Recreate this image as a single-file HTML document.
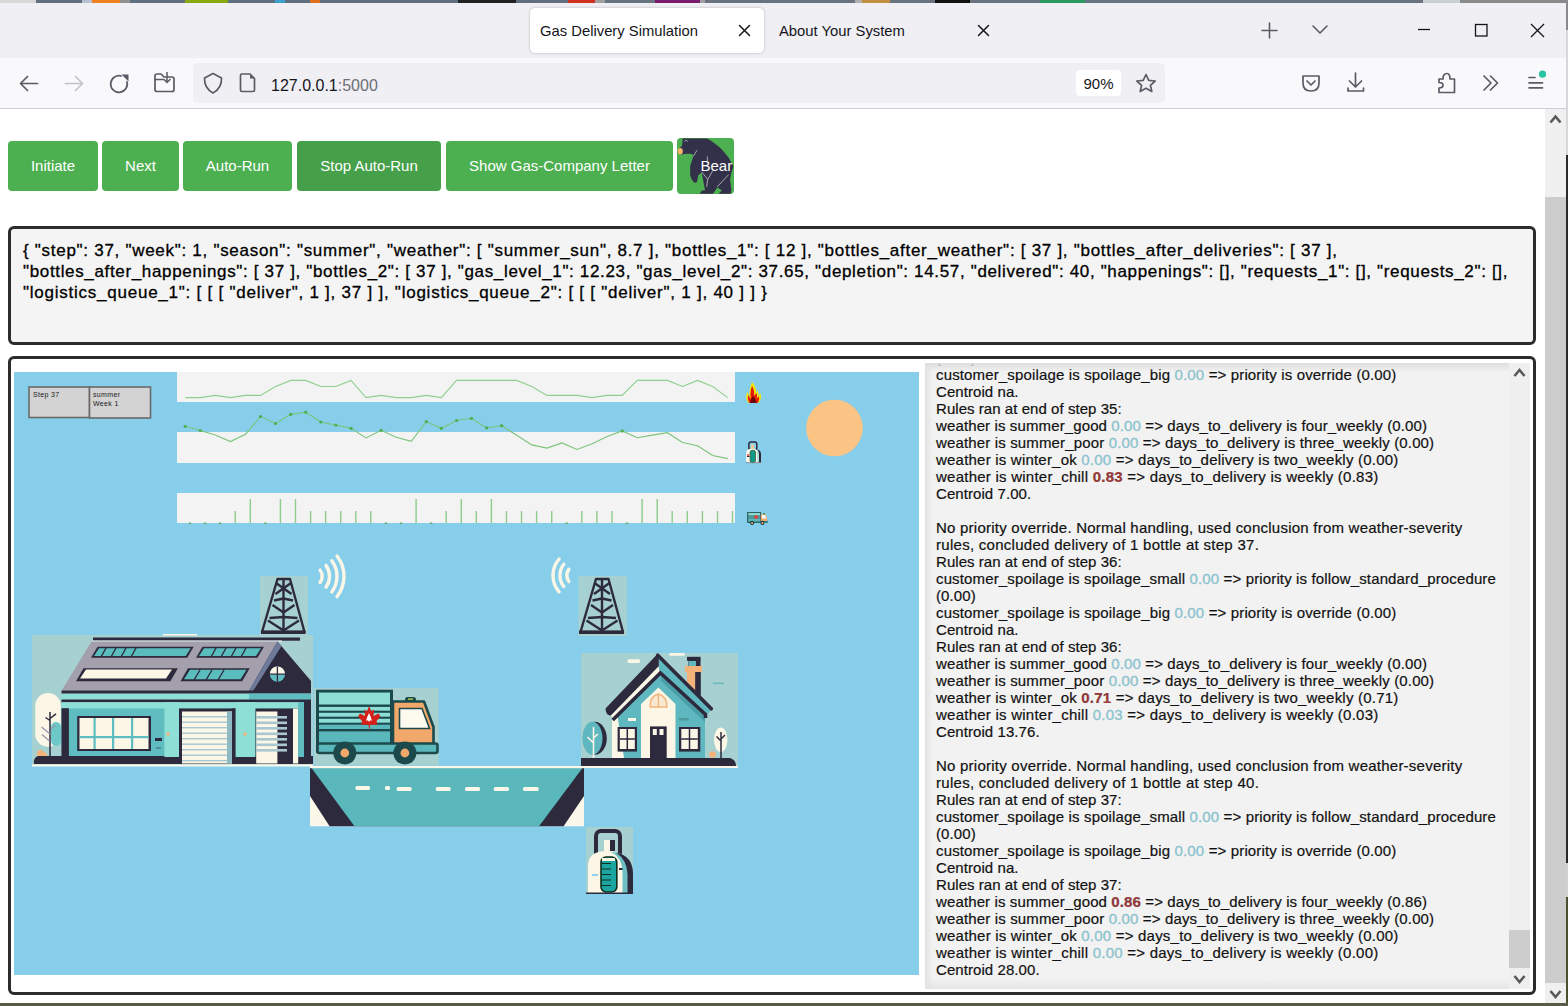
<!DOCTYPE html>
<html><head><meta charset="utf-8">
<style>
*{box-sizing:border-box}
html,body{margin:0;padding:0;width:1568px;height:1006px;overflow:hidden;background:#fff;font-family:"Liberation Sans",sans-serif;position:relative}
.a{position:absolute}
.nw{white-space:nowrap}
#desk{left:0;top:0;width:1568px;height:3px;background:linear-gradient(90deg,#d8d8d8 0px 36px,#5f6f80 36px 82px,#b8c0d0 82px 92px,#f08020 92px 120px,#909090 120px 130px,#5f6f80 130px 185px,#88aa10 185px 228px,#5f6f80 228px 275px,#3aa0c8 275px 285px,#5f6f80 285px 310px,#e07020 310px 320px,#5f6f80 320px 458px,#222222 458px 516px,#5f6f80 516px 568px,#d03020 568px 595px,#a0a0a0 595px 605px,#6a7480 605px 655px,#7a1a6a 655px 700px,#a0a0a0 700px 705px,#6a7480 705px 855px,#b0b0b0 855px 862px,#c09040 862px 890px,#6a7480 890px 935px,#111111 935px 970px,#6a7480 970px 1040px,#2a9a60 1040px 1085px,#6a7480 1085px 1423px,#c8d0d0 1423px 1460px,#8a8a8a 1460px 1568px)}
#tabbar{left:0;top:3px;width:1566px;height:55px;background:#f0eff4}
#navbar{left:0;top:58px;width:1566px;height:50px;background:#f9f9fb}
#navline{left:0;top:108px;width:1566px;height:1px;background:#cfcfd8}
.tab{border-radius:5px}
#tab1{left:530px;top:8px;width:234px;height:45px;background:#fff;box-shadow:0 0 3px rgba(0,0,0,.25)}
.tabt{font-size:14.8px;color:#15141a;top:22.5px}
#url{left:193px;top:63px;width:972px;height:40px;background:#f0f0f4;border-radius:5px}
#zoom{left:1076px;top:70px;width:45px;height:26px;background:#fff;border-radius:4px;font-size:15px;color:#15141a;text-align:center;line-height:27px}
.btn{top:141px;height:50px;background:#4caf50;border-radius:4px;color:#fff;font-size:15px;line-height:50px;text-align:center}
#json{left:8px;top:226px;width:1528px;height:119px;border:3px solid #2c2c2c;border-radius:6px;background:#f4f4f4}
.jl{left:23px;font-size:17px;color:#000;-webkit-text-stroke:.3px #000}
#cont{left:8px;top:356px;width:1528px;height:639px;border:3px solid #2c2c2c;border-radius:6px;background:#fff}
#sky{left:14px;top:372px;width:905px;height:603px;background:#87ceeb;overflow:hidden}
#log{left:925px;top:363px;width:605px;height:626px;background:#f2f2f2;overflow:hidden}
.ll{left:11px;font-size:15px;line-height:17px;color:#111;white-space:nowrap;-webkit-text-stroke:.2px #111}
.z{color:#8cc3ce;font-weight:normal;-webkit-text-stroke:.35px #8cc3ce}
.r{color:#a33a3a;font-weight:bold}
.tA{letter-spacing:.148px}.tB{letter-spacing:.073px}.tC{letter-spacing:.05px}.tD{letter-spacing:.12px}.tE{letter-spacing:.15px}.tF{letter-spacing:.21px}.tG{letter-spacing:.24px}.tH{letter-spacing:.07px}.tI{letter-spacing:.235px}.tJ{letter-spacing:.28px}.tK{letter-spacing:.14px}.tL{letter-spacing:.1px}
#pscroll{left:1545px;top:109px;width:21px;height:894px;background:#f0f0f0}
#pthumb{left:1545px;top:197px;width:21px;height:786px;background:#cdcdcd}
#winr{left:1566px;top:0;width:2px;height:1006px;background:linear-gradient(#8a8a8a 0 30px,#d8d8d8 30px 155px,#2a2a2a 155px 863px,#d0d0d0 863px 897px,#4a5030 897px)}
#deskb{left:0;top:1003px;width:1568px;height:3px;background:#5a5a48}
</style></head><body>
<div id="desk" class="a"></div>
<div id="tabbar" class="a"></div>
<div id="tab1" class="a tab"></div>
<div class="a nw tabt" style="left:540px">Gas Delivery Simulation</div>
<div class="a nw tabt" style="left:779px">About Your System</div>
<div id="navbar" class="a"></div>
<div id="url" class="a"></div>
<div id="zoom" class="a">90%</div>
<div class="a nw" style="left:271px;top:77px;font-size:16px;color:#15141a">127.0.0.1<span style="color:#6d6d74">:5000</span></div>
<div id="navline" class="a"></div>
<svg class="a" style="left:0;top:0" width="1568" height="110" viewBox="0 0 1568 110">
<g fill="none" stroke="#15141a" stroke-width="1.5" stroke-linecap="round">
<path d="M739.5,25.5 L749.5,35.5 M749.5,25.5 L739.5,35.5"/>
<path d="M978.5,25.5 L988.5,35.5 M988.5,25.5 L978.5,35.5"/>
</g>
<g fill="none" stroke="#5b5b66" stroke-width="1.6" stroke-linecap="round" stroke-linejoin="round">
<path d="M1269.5,23 L1269.5,38 M1262,30.5 L1277,30.5"/>
<path d="M1313,26 L1320,33 L1327,26"/>
</g>
<g fill="none" stroke="#15141a" stroke-width="1.3">
<path d="M1418,29.5 L1430,29.5"/>
<rect x="1475.5" y="24.5" width="11.5" height="11.5"/>
<path d="M1531,24 L1544,37 M1544,24 L1531,37"/>
</g>
<!-- nav icons -->
<g fill="none" stroke="#5b5b66" stroke-width="1.7" stroke-linecap="round" stroke-linejoin="round">
<path d="M20.5,83.5 L37.5,83.5 M27.5,76.5 L20.5,83.5 L27.5,90.5"/>
<path d="M121.1,76 A8.3,8.3 0 1 0 127,81.9"/>
<path d="M155,76 Q155,74 157,74 L161,74 L164,77 L172,77 Q174,77 174,79 L174,89.5 Q174,91.5 172,91.5 L157,91.5 Q155,91.5 155,89.5Z"/>
<path d="M155,79.5 L163,79.5"/>
<path d="M213,73.5 L221.5,78 Q222,88 213,93 Q204,88 204.5,78Z"/>
<path d="M242,74 L250,74 L254.5,78.5 L254.5,90 Q254.5,91.5 253,91.5 L242,91.5 Q240.5,91.5 240.5,90 L240.5,75.5 Q240.5,74 242,74Z"/>
<path d="M1146,74.5 L1148.8,80.3 L1155.2,81 L1150.4,85.3 L1151.8,91.5 L1146,88.3 L1140.2,91.5 L1141.6,85.3 L1136.8,81 L1143.2,80.3Z"/>
<path d="M1303,76 L1319,76 L1319,83 Q1319,91 1311,91 Q1303,91 1303,83Z"/>
<path d="M1307,81 L1311,85 L1315,81"/>
<path d="M1355.5,73 L1355.5,87 M1349.5,81 L1355.5,87 L1361.5,81 M1348,88 L1348,91 L1363.5,91 L1363.5,88"/>
<path d="M1484,76 L1491,83 L1484,90 M1490.5,76 L1497.5,83 L1490.5,90"/>
<path d="M1529,77.5 L1535,77.5 M1529,82.8 L1542.5,82.8 M1529,87.8 L1542.5,87.8"/>
<path d="M1439,79 L1443,79 Q1443,73.5 1447,73.5 Q1450,73.5 1450,79 L1454.5,79 L1454.5,92.5 L1439,92.5 L1439,88 Q1443,88 1443,85 Q1443,82.5 1439,82.5Z"/>
</g>
<path d="M1474,14 L1476,16" stroke="none"/>
<g fill="none" stroke="#c4c4c8" stroke-width="1.7" stroke-linecap="round" stroke-linejoin="round">
<path d="M65.5,83.5 L82.5,83.5 M75.5,76.5 L82.5,83.5 L75.5,90.5"/>
</g>
<path d="M121.5,74.5 L128.5,74.5 L128.5,81.5Z" fill="#5b5b66"/>
<path d="M167,72 L167,82 M163.5,79 L167,82.5 L170.5,79" fill="none" stroke="#5b5b66" stroke-width="1.5"/>
<path d="M250,74 L254.5,78.5 L250,78.5Z" fill="#5b5b66"/>
<circle cx="1542.5" cy="74.2" r="3.6" fill="#2ac3a2"/>
</svg>


<div class="a btn" style="left:8px;width:90px">Initiate</div>
<div class="a btn" style="left:102px;width:77px">Next</div>
<div class="a btn" style="left:183px;width:109px">Auto-Run</div>
<div class="a btn" style="left:297px;width:144px;background:#45a049">Stop Auto-Run</div>
<div class="a btn" style="left:446px;width:227px">Show Gas-Company Letter</div>
<div class="a" style="left:677px;top:138px;width:57px;height:56px;background:#4caf50;border-radius:4px;overflow:hidden">
<svg width="57" height="56" viewBox="0 0 57 56" style="position:absolute;left:0;top:0">
<path d="M5.7,0.5 L29.4,0.5 C33,1.5 36,4.3 36.1,4.3 C40,7 44.3,11 44.3,11 C48,15 51.7,19.7 51.7,19.7 L55,25.8 L56.4,28.5 L54.4,34.6 L53,41.4 L54.4,51.5 L53.7,55.8 L41.5,55.8 L44.9,52.2 L40.2,49.5 L36.1,55.8 L22.6,55.8 L24.7,52.8 L28,52.2 L26,41.4 L24.7,34.6 L21.3,37.3 L20,44 C18.5,45 17.5,45 16.6,44 C14,41 13.2,37.3 13.2,37.3 L13.2,27.8 L15.9,19.7 L15.9,16.4 C13,15.5 11,15.7 9.8,15.7 L3.7,16.4 L0.3,14.3 L1.7,10.9 L5.1,7.6 Z" fill="#33304a"/>
<ellipse cx="3.2" cy="13.2" rx="2.6" ry="3.2" fill="#f5b46a"/>
<path d="M7.5,3.5 Q9,0.8 10.8,3.5" fill="none" stroke="#ddd" stroke-width=".7"/>
<path d="M20,12.3 L16.2,18.4 M30.4,18.4 L30.4,23.1 M35.5,33.2 L30.7,41.4 L29.7,48.8 M24.7,33.9 L30.7,41.4 M51.7,36.6 L40.2,48.8" fill="none" stroke="#c8c8c0" stroke-width=".8"/>
</svg>
<div class="a nw" style="left:23.5px;top:18.5px;font-size:15px;color:#fff">Bear</div>
</div>

<div id="json" class="a"></div>
<div class="a nw jl" style="top:241px;letter-spacing:.716px">{ "step": 37, "week": 1, "season": "summer", "weather": [ "summer_sun", 8.7 ], "bottles_1": [ 12 ], "bottles_after_weather": [ 37 ], "bottles_after_deliveries": [ 37 ],</div>
<div class="a nw jl" style="top:262px;letter-spacing:.655px">"bottles_after_happenings": [ 37 ], "bottles_2": [ 37 ], "gas_level_1": 12.23, "gas_level_2": 37.65, "depletion": 14.57, "delivered": 40, "happenings": [], "requests_1": [], "requests_2": [],</div>
<div class="a nw jl" style="top:283px;letter-spacing:.759px">"logistics_queue_1": [ [ [ "deliver", 1 ], 37 ] ], "logistics_queue_2": [ [ [ "deliver", 1 ], 40 ] ] }</div>

<div id="cont" class="a"></div>
<div id="sky" class="a">
<svg style="position:absolute;left:0;top:0" width="905" height="603" viewBox="14 372 905 603">
<rect x="177" y="372" width="558" height="30" fill="#f3f3f3"/>
<rect x="177" y="432" width="558" height="31" fill="#f3f3f3"/>
<rect x="177" y="493" width="558" height="30" fill="#f3f3f3"/>
<polyline points="185.2,397.6 200.3,397.6 215.3,395.4 230.4,397.6 245.5,395.4 260.5,395.4 275.6,386.5 290.7,380.4 305.8,380.4 320.8,386.5 335.9,386.5 351.0,380.4 366.0,397.6 381.1,395.4 396.2,397.6 411.2,397.6 426.3,395.4 441.4,397.6 456.5,380.4 471.5,380.4 486.6,380.4 501.7,380.4 516.7,380.4 531.8,386.5 546.9,395.4 562.0,395.4 577.0,395.4 592.1,397.6 607.2,395.4 622.2,395.4 637.3,380.4 652.4,380.4 667.4,380.4 682.5,386.5 697.6,380.4 712.7,386.5 727.7,397.6" fill="none" stroke="#8fd08f" stroke-width="1.1"/>
<polyline points="185.2,426.3 200.3,430.5 215.3,435.0 230.4,441.6 245.5,434.2 260.5,416.6 275.6,423.5 290.7,414.4 305.8,412.2 320.8,422.0 335.9,425.1 351.0,428.3 366.0,437.9 381.1,430.3 396.2,437.2 411.2,441.4 426.3,421.6 441.4,428.3 456.5,420.5 471.5,418.3 486.6,427.9 501.7,425.7 516.7,435.3 531.8,444.9 546.9,448.1 562.0,442.9 577.0,449.4 592.1,443.8 607.2,436.4 622.2,430.9 637.3,437.7 652.4,435.1 667.4,432.7 682.5,442.5 697.6,445.7 712.7,455.5 727.7,458.6" fill="none" stroke="#7cc47c" stroke-width="1.1"/>
<g fill="#4caf50"><circle cx="185.2" cy="426.3" r="1.6"/><circle cx="200.3" cy="430.5" r="1.6"/><circle cx="260.5" cy="416.6" r="1.6"/><circle cx="275.6" cy="423.5" r="1.6"/><circle cx="290.7" cy="414.4" r="1.6"/><circle cx="305.8" cy="412.2" r="1.6"/><circle cx="320.8" cy="422.0" r="1.6"/><circle cx="335.9" cy="425.1" r="1.6"/><circle cx="351.0" cy="428.3" r="1.6"/><circle cx="381.1" cy="430.3" r="1.6"/><circle cx="426.3" cy="421.6" r="1.6"/><circle cx="441.4" cy="428.3" r="1.6"/><circle cx="456.5" cy="420.5" r="1.6"/><circle cx="471.5" cy="418.3" r="1.6"/><circle cx="486.6" cy="427.9" r="1.6"/><circle cx="501.7" cy="425.7" r="1.6"/><circle cx="622.2" cy="430.9" r="1.6"/></g>
<rect x="188.8" y="522.6" width="2.4" height="1.2" fill="#4aa84a"/><rect x="203.9" y="522.6" width="2.4" height="1.2" fill="#4aa84a"/><rect x="218.9" y="522.6" width="2.4" height="1.2" fill="#4aa84a"/><rect x="234.5" y="511" width="1.4" height="12" fill="#8ccc8c"/><rect x="249.6" y="499" width="1.4" height="24" fill="#8ccc8c"/><rect x="264.2" y="522.6" width="2.4" height="1.2" fill="#4aa84a"/><rect x="279.7" y="499" width="1.4" height="24" fill="#8ccc8c"/><rect x="294.8" y="499" width="1.4" height="24" fill="#8ccc8c"/><rect x="309.9" y="511" width="1.4" height="12" fill="#8ccc8c"/><rect x="324.9" y="511" width="1.4" height="12" fill="#8ccc8c"/><rect x="340.0" y="511" width="1.4" height="12" fill="#8ccc8c"/><rect x="355.1" y="511" width="1.4" height="12" fill="#8ccc8c"/><rect x="370.1" y="511" width="1.4" height="12" fill="#8ccc8c"/><rect x="384.7" y="522.6" width="2.4" height="1.2" fill="#4aa84a"/><rect x="399.8" y="522.6" width="2.4" height="1.2" fill="#4aa84a"/><rect x="415.4" y="499" width="1.4" height="24" fill="#8ccc8c"/><rect x="429.9" y="522.6" width="2.4" height="1.2" fill="#4aa84a"/><rect x="445.5" y="511" width="1.4" height="12" fill="#8ccc8c"/><rect x="460.6" y="499" width="1.4" height="24" fill="#8ccc8c"/><rect x="475.6" y="511" width="1.4" height="12" fill="#8ccc8c"/><rect x="490.7" y="499" width="1.4" height="24" fill="#8ccc8c"/><rect x="505.8" y="511" width="1.4" height="12" fill="#8ccc8c"/><rect x="520.8" y="511" width="1.4" height="12" fill="#8ccc8c"/><rect x="535.9" y="511" width="1.4" height="12" fill="#8ccc8c"/><rect x="551.0" y="511" width="1.4" height="12" fill="#8ccc8c"/><rect x="565.5" y="522.6" width="2.4" height="1.2" fill="#4aa84a"/><rect x="581.1" y="511" width="1.4" height="12" fill="#8ccc8c"/><rect x="596.2" y="511" width="1.4" height="12" fill="#8ccc8c"/><rect x="611.3" y="511" width="1.4" height="12" fill="#8ccc8c"/><rect x="625.8" y="522.6" width="2.4" height="1.2" fill="#4aa84a"/><rect x="641.4" y="499" width="1.4" height="24" fill="#8ccc8c"/><rect x="656.5" y="499" width="1.4" height="24" fill="#8ccc8c"/><rect x="671.5" y="511" width="1.4" height="12" fill="#8ccc8c"/><rect x="686.6" y="511" width="1.4" height="12" fill="#8ccc8c"/><rect x="701.7" y="511" width="1.4" height="12" fill="#8ccc8c"/><rect x="716.8" y="511" width="1.4" height="12" fill="#8ccc8c"/><rect x="731.8" y="511" width="1.4" height="12" fill="#8ccc8c"/>
<circle cx="834.5" cy="428" r="28.3" fill="#fbc384"/>
<!-- step boxes -->
<rect x="29" y="387" width="60.5" height="30.5" fill="#d3d3d3" stroke="#6a6a6a" stroke-width="1.6"/>
<rect x="89.5" y="387" width="61" height="31" fill="#d3d3d3" stroke="#6a6a6a" stroke-width="1.6"/>
<g font-family="Liberation Sans" font-size="7" fill="#1a1a1a" letter-spacing=".35">
<text x="33" y="396.5">Step 37</text>
<text x="93" y="396.5">summer</text>
<text x="93" y="405.5">Week 1</text>
</g>
<!-- small icons -->
<g id="flame">
<path d="M752,382 C755,385 756.5,389 756,393 L757.6,390.2 C759,393 758.5,395 758,397 L760.6,393.2 C761.5,397 761,401 758,403 L749,403 C746,401 745.5,396 747.2,391.9 C748.5,394 749,396 749.5,397 C749,392 750,387 752,382Z" fill="#f2e600"/>
<path d="M752,386 C754,389 754.5,392 754,396 L756.5,393 C757.5,396 757,398 756,399 L758.8,396.5 C759.5,399 759,401.5 757.5,403 L749.5,403 C748,401 747.5,398 748.2,395 C749.5,397 750,398 750.8,399 C750,394 750.5,390 752,386Z" fill="#e8180c"/>
<path d="M753,396 C755,398 756,400 756.5,403 L750,403 C750.5,400 751.5,398 753,396Z" fill="#700808"/>
</g>
<g id="bicon">
<rect x="748.9" y="441.9" width="7.9" height="8" rx="2" fill="none" stroke="#2e2a3e" stroke-width="1.5"/>
<rect x="751" y="444.5" width="3" height="4.5" fill="#f0c890"/>
<path d="M746.1,462.6 L746.1,453 Q746.1,448.8 752.5,448.8 Q759.1,448.8 759.1,453 L759.1,462.6Z" fill="#fbf8ee"/>
<path d="M755.5,449 Q761,449.5 761,454 L761,462.6 L758.8,462.6 L758.8,454 Q758.5,450.5 755.5,449Z" fill="#2e2a3e"/>
<path d="M757,449.2 Q758.8,450.5 758.8,454 L758.8,462.6 L757.5,462.6Z" fill="#9ee0dc"/>
<rect x="750.1" y="450.3" width="5.4" height="12.3" rx="2" fill="#0e9a8a" stroke="#3a4a20" stroke-width=".7"/>
<rect x="747" y="454" width="2.5" height="2" fill="#f07070"/>
<rect x="747" y="456" width="2.5" height="1" fill="#2e2a3e"/>
<rect x="746" y="462.3" width="15" height=".8" fill="#8a7a80"/>
</g>
<g id="ticon">
<rect x="747.6" y="512.6" width="13" height="9.8" fill="#4e9a9a" stroke="#2a5a5a" stroke-width="1"/>
<rect x="748.5" y="513.3" width="11.5" height="1.6" fill="#9aeede"/>
<rect x="748.5" y="519" width="11.5" height="2" fill="#5ab8bc"/>
<path d="M760.8,514.2 L765.5,514.2 L767,518 L767,521.5 L760.8,521.5Z" fill="#f3a86b"/>
<path d="M762,515 L765.2,515 L766.3,518.5 L762,518.5Z" fill="#f4fbfb"/>
<rect x="760" y="521" width="8" height="1.8" fill="#3a7a7a"/>
<circle cx="752.1" cy="522.9" r="2.1" fill="#1a4048"/><circle cx="762.4" cy="522.9" r="2.1" fill="#1a4048"/>
<circle cx="752.1" cy="523" r="1" fill="#f3b070"/><circle cx="762.4" cy="523" r="1" fill="#f3b070"/>
<circle cx="756.2" cy="516.9" r="2" fill="#e04040"/>
<rect x="763" y="513" width="2" height="1.4" fill="#3a8a50"/>
</g>
<!-- signal waves -->
<g fill="none" stroke="#fbf6e6" stroke-width="3.4" stroke-linecap="round">
<path d="M320.1,570.1 A11,11 0 0 1 320.1,582.5"/>
<path d="M326.0,565.4 A18.5,18.5 0 0 1 326.0,587.2"/>
<path d="M331.8,560.7 A26,26 0 0 1 331.8,591.9"/>
<path d="M337.0,556.0 A33,33 0 0 1 337.0,596.6"/>
<path d="M568.9,569.2 A11,11 0 0 0 568.9,581.6"/>
<path d="M563.8,564.3 A18,18 0 0 0 563.8,586.5"/>
<path d="M559.1,559.0 A25,25 0 0 0 559.1,591.8"/>
</g>

<!-- tower images -->
<g id="tower1">
<rect x="260" y="576" width="48" height="59" fill="#a7d1d0"/>
<g fill="none" stroke="#2e2a3e" stroke-width="2.4" stroke-linejoin="round">
<path d="M277.5,579 L290,579 L304.5,632 L262,632Z"/>
<path d="M283.5,579 L283.5,632"/>
<path d="M276,583 L291.5,594 M291,583 L275.5,594"/>
<path d="M274,600.5 L283.5,598.5 L293,600.5"/>
<path d="M272.5,605 L283.5,612.5 L294.5,605"/>
<path d="M269.5,618 L283.5,617 L297.5,618"/>
<path d="M268,620.5 L283.5,630.5 L299,620.5"/>
</g>
<rect x="261" y="630.5" width="44.5" height="3.5" fill="#2e2a3e"/>
</g>
<g id="tower2">
<rect x="578.5" y="576" width="48.5" height="60" fill="#a7d1d0"/>
<g fill="none" stroke="#2e2a3e" stroke-width="2.4" stroke-linejoin="round">
<path d="M596,579 L608.5,579 L623,632 L580.5,632Z"/>
<path d="M602,579 L602,632"/>
<path d="M594.5,583 L610,594 M609.5,583 L594,594"/>
<path d="M592.5,600.5 L602,598.5 L611.5,600.5"/>
<path d="M591,605 L602,612.5 L613,605"/>
<path d="M588,618 L602,617 L616,618"/>
<path d="M586.5,620.5 L602,630.5 L617.5,620.5"/>
</g>
<rect x="579" y="630.5" width="45" height="3.5" fill="#2e2a3e"/>
</g>
<!-- warehouse -->
<g id="warehouse">
<rect x="32" y="635" width="281" height="130" fill="#a7d1d0"/>
<rect x="32" y="764.5" width="281" height="2" fill="#fbf8ea"/>
<!-- tree -->
<rect x="35.2" y="693" width="25.6" height="53.7" rx="12.8" fill="#fbf6e6"/>
<rect x="51" y="722" width="10" height="24" rx="5" fill="#6ec8c8"/>
<path d="M51,727 L51,746.7 L48,746.7 Z" fill="#fbf6e6"/>
<path d="M50,712 L50,757 M50,718.5 L56,713.8 M50,720.5 L45.5,717.5" fill="none" stroke="#2e2a3e" stroke-width="1.5"/>
<path d="M50,734 L41.5,727 M49.5,741 L42,734.5 M51,729 L55.5,725" fill="none" stroke="#9a98b0" stroke-width="1.4"/>
<circle cx="40.5" cy="753.5" r="3.6" fill="#f3b27a"/><circle cx="44.5" cy="755" r="2.6" fill="#f3b27a"/>
<!-- roof -->
<rect x="93" y="637.5" width="207" height="3.2" fill="#2e2a3e"/>
<rect x="92" y="640.5" width="190" height="1.2" fill="#f6f6f6"/><rect x="163" y="634" width="34" height="1.5" fill="#fbf6e6"/>
<path d="M91.5,641.5 L277.5,641.5 L249,690.8 L61.5,690.8Z" fill="#a39fad"/>
<path d="M277.5,641.5 L249,690.8 L253,690.8 L279,645Z" fill="#7d85a3"/>
<!-- panels -->
<path d="M97.5,646.8 L193.7,646.8 L187.2,657.8 L91,657.8Z" fill="#2e2a3e"/>
<path d="M99,648.3 L190.7,648.3 L185.7,656 L94,656Z" fill="#5bbcbd"/>
<path d="M202.5,646.8 L264,646.8 L257.5,657.8 L196,657.8Z" fill="#2e2a3e"/>
<path d="M204,648.3 L261,648.3 L256,656 L199,656Z" fill="#5bbcbd"/>
<path d="M83.5,668.3 L177.9,668.3 L170.4,681.2 L76,681.2Z" fill="#2e2a3e"/>
<path d="M86,669.6 L172,669.6 L166,678.5 L80,678.5Z" fill="#fbf6e6"/>
<path d="M188,668.3 L249.7,668.3 L242.2,681.2 L180.5,681.2Z" fill="#2e2a3e"/>
<path d="M190,669.8 L246.5,669.8 L240.5,679.2 L184,679.2Z" fill="#5bbcbd"/>
<g stroke="#2e2a3e" stroke-width="1.4">
<path d="M106,648 L101,657 M116,648 L111,657 M126,648 L121,657 M136,648 L131,657 M216,648 L211,657 M226,648 L221,657 M236,648 L231,657 M246,648 L241,657 M200,670 L194,680 M212,670 L206,680 M224,670 L218,680"/>
</g>
<!-- gable -->
<path d="M277.5,641.5 L311,681 L311,691 L249,691Z" fill="#2e2a3e"/>
<path d="M277.5,641.5 L281.5,646 L253,691 L249,691Z" fill="#6f7a9a"/>
<circle cx="277.4" cy="674.2" r="7.6" fill="#5fbcc0"/>
<path d="M269.8,674.2 A7.6,7.6 0 0 1 285,674.2Z" fill="#fbf6e6"/>
<path d="M269.8,674.2 L285,674.2 M277.4,666.6 L277.4,681.8" stroke="#2e2a3e" stroke-width="1.3"/>
<!-- bands -->
<rect x="61.5" y="690.5" width="249.5" height="3.2" fill="#2e2a3e"/>
<rect x="61.5" y="693.7" width="249.5" height="6" fill="#8ee0d6"/>
<rect x="249" y="693.7" width="62" height="6" fill="#5fbcc0"/>
<rect x="61.5" y="699.5" width="249.5" height="2.8" fill="#2e2a3e"/>
<rect x="61.5" y="702.3" width="249.5" height="6.5" fill="#8ee0d6"/>
<rect x="61.5" y="708.5" width="249.5" height="48" fill="#5fbcc0"/>
<rect x="61.5" y="708.2" width="7.4" height="49" fill="#2e2a3e"/>
<!-- base -->
<path d="M38,756 L313,756 L313,764 L34,764 Q33,758 38,756Z" fill="#2e2a3e"/>
<!-- window -->
<rect x="77.2" y="716" width="73.8" height="35" fill="#2e2a3e"/>
<rect x="79.5" y="718" width="69" height="31" fill="#fbf6e6"/>
<g fill="#5fbcc0"><rect x="93.5" y="718" width="2.2" height="31"/><rect x="112" y="718" width="2.2" height="31"/><rect x="131" y="718" width="2.2" height="31"/><rect x="79.5" y="736" width="69" height="2.2"/></g>
<rect x="155" y="738" width="7" height="3" fill="#2e2a3e"/>
<rect x="156" y="747" width="5" height="2" fill="#4a8f98"/>
<!-- pillars / doors -->
<rect x="164.4" y="702" width="14.6" height="55" fill="#8ee0d6"/>
<circle cx="168" cy="734" r="1.8" fill="#f3b27a"/>
<rect x="179" y="708.5" width="57" height="55" fill="#2e2a3e"/>
<rect x="182" y="711.5" width="50" height="52" fill="#fbf6e6"/>
<g fill="#a8c7d1"><rect x="182" y="716" width="50" height="1.4"/><rect x="182" y="721.5" width="50" height="1.4"/><rect x="182" y="727" width="50" height="1.4"/><rect x="182" y="732.5" width="50" height="1.4"/><rect x="182" y="738" width="50" height="1.4"/><rect x="182" y="743.5" width="50" height="1.4"/><rect x="182" y="749" width="50" height="1.4"/><rect x="182" y="754.5" width="50" height="1.4"/><rect x="182" y="760" width="50" height="1.4"/></g>
<rect x="227" y="711.5" width="5" height="52" fill="#8fb9c3"/>
<rect x="232" y="708.5" width="4" height="55" fill="#2e2a3e"/>
<rect x="235.6" y="702" width="20" height="55" fill="#8ee0d6"/>
<circle cx="245" cy="734" r="1.8" fill="#f3b27a"/>
<rect x="255.5" y="708.5" width="43" height="55" fill="#2e2a3e"/>
<rect x="256.2" y="711.5" width="21.2" height="52" fill="#fbf6e6"/>
<g fill="#a8c7d1"><rect x="256" y="716" width="31" height="2.6"/><rect x="256" y="721.5" width="31" height="2.6"/><rect x="256" y="727" width="31" height="2.6"/><rect x="256" y="732.5" width="31" height="2.6"/><rect x="256" y="738" width="31" height="2.6"/><rect x="256" y="743.5" width="31" height="2.6"/><rect x="256" y="749" width="31" height="2.6"/></g>
<rect x="293" y="708.5" width="5.2" height="55" fill="#fbf6e6"/>
<rect x="298.2" y="702" width="6" height="55" fill="#5fbcc0"/>
<rect x="304" y="702" width="7" height="61" fill="#2e2a3e"/>
</g>
<!-- truck -->
<g id="truck">
<rect x="314" y="688" width="124.7" height="77.5" fill="#a7d1d0"/>
<rect x="317.5" y="691.2" width="74" height="60" fill="#5ab8bc" stroke="#1c4a4c" stroke-width="3"/>
<rect x="319" y="692.7" width="71" height="12.5" fill="#8fded5"/>
<g fill="#1c4a4c"><rect x="319" y="704.5" width="71" height="2.4"/><rect x="319" y="710.5" width="71" height="2.2"/><rect x="319" y="716.5" width="71" height="2.2"/><rect x="319" y="722.5" width="71" height="2.2"/><rect x="319" y="729" width="71" height="2.4"/></g>
<g fill="#8fded5"><rect x="319" y="707" width="71" height="3.5"/><rect x="319" y="713" width="71" height="3.5"/><rect x="319" y="719" width="71" height="3.5"/></g>
<path d="M393,701.5 L424,701.5 L433.5,727 L433.5,745 L393,745Z" fill="#f3a86b" stroke="#1c4a4c" stroke-width="2.6" stroke-linejoin="round"/>
<path d="M399.5,708.5 L422,708.5 L429.5,728.5 L399.5,728.5Z" fill="#fdfaf0" stroke="#1c4a4c" stroke-width="1.6"/>
<rect x="405" y="697" width="11" height="5" rx="2.5" fill="#1c4a4c"/>
<rect x="408" y="698.5" width="5" height="1.2" fill="#c9e04a"/>
<rect x="317.5" y="743.5" width="120" height="9.5" rx="2" fill="#5ab8bc" stroke="#1c4a4c" stroke-width="2.6"/>
<circle cx="344.8" cy="753" r="11.5" fill="#1c4a4c"/><circle cx="344.8" cy="753" r="4.4" fill="#f3a86b"/>
<circle cx="404.9" cy="753" r="11.5" fill="#1c4a4c"/><circle cx="404.9" cy="753" r="4.4" fill="#f3a86b"/>
<path d="M369,706 L371.5,711.5 L374,709.5 L373.5,716 L378.5,713.5 L380.5,716.5 L376.5,721 L377.5,724.5 L370,725 L369.5,731 L368.5,725 L361,724.5 L362,721 L358,716.5 L360,713.5 L365,716 L364.5,709.5 L367,711.5Z" fill="#d6201a"/>
<path d="M369,713 Q367,717 366,721 Q368,719 369,722 Q370,719 372,721 Q371,717 369,713Z" fill="#fff"/>
</g>
<!-- road -->
<g id="road">
<rect x="310" y="766" width="274" height="60.3" fill="#fbf8ea"/>
<path d="M310,768 L584,768 L584,796 L563.6,826.3 L329.6,826.3 L310,796Z" fill="#2e2a3e"/>
<path d="M311.5,768 L582.5,768 L539,826.3 L354.5,826.3Z" fill="#5ab8bc"/>
<rect x="310" y="766" width="274" height="2.2" fill="#fbf8ea"/>
<g fill="#fbf8ea"><rect x="355.5" y="786" width="14.5" height="4" rx="1.5"/><rect x="385" y="786" width="5" height="4" rx="1.5"/><rect x="396.6" y="787" width="15" height="4" rx="1.5"/><rect x="435.8" y="787" width="14.8" height="4" rx="1.5"/><rect x="465" y="787" width="15" height="4" rx="1.5"/><rect x="493.8" y="787" width="15.2" height="4" rx="1.5"/><rect x="523" y="787" width="15.6" height="4" rx="1.5"/></g>
</g>
<!-- house -->
<g id="house">
<rect x="581" y="653" width="157" height="115" fill="#a7d1d0"/>
<rect x="627.3" y="659.2" width="13" height="3.8" rx="1.9" fill="#fbf6e6"/>
<rect x="669.3" y="653" width="15.5" height="2.8" rx="1.4" fill="#fbf6e6"/>
<rect x="713" y="682.5" width="11" height="1.6" fill="#6fb9c0"/>
<!-- chimney -->
<rect x="688.5" y="660" width="12" height="38" fill="#2e2a3e"/>
<rect x="689" y="661" width="7" height="5" fill="#5fb8bf"/>
<rect x="687" y="672" width="8.4" height="22" fill="#f3b27a"/>
<rect x="685" y="666" width="17" height="6.3" fill="#f3b27a"/>
<rect x="695.4" y="672" width="5.2" height="26" fill="#2e2a3e"/>
<rect x="687" y="656.8" width="13.6" height="4" fill="#2e2a3e"/>
<!-- walls -->
<path d="M611.8,719 L659.5,673 L705,716 L705,758 L611.8,758Z" fill="#5fb8bf"/>
<path d="M661,676 L705,716 L705,722 L661,681Z" fill="#4a9fa8"/>
<path d="M611.8,719 L617.5,716 L624,758 L611.8,758Z" fill="#fbf6e6"/>
<path d="M641,758 L641,704 L658.4,687.4 L675.5,704 L675.5,758Z" fill="#fbf6e6"/>
<path d="M650,707 Q650,696 658.4,694 Q667,696 667,707Z" fill="#f8e8d0" stroke="#f3b27a" stroke-width="1.3"/>
<path d="M658.4,694 L658.4,707" stroke="#f3b27a" stroke-width="1.2"/>
<!-- roof -->
<path d="M658.8,656.5 L711.5,709 L709,712.5 L705,716 L659,670Z" fill="#5fb8bf"/>
<path d="M657.7,655.2 L711.3,708.8" fill="none" stroke="#2e2a3e" stroke-width="3.6" stroke-linecap="round"/>
<path d="M605.5,708.5 L656.5,655 Q657.7,654 658.8,655.5 L658.8,666.3 L611,715.5 Q606,716 605.5,708.5Z" fill="#2e2a3e"/>
<path d="M611,715.5 L658.8,666.3 L659.2,673 L613.5,720Z" fill="#fbf6e6"/>
<path d="M612.7,720 L660.4,673 L705.5,714.5 L705.5,718" fill="none" stroke="#2e2a3e" stroke-width="3.6" stroke-linejoin="miter"/>
<!-- door & windows -->
<rect x="650" y="726.4" width="16.7" height="32" fill="#2e2a3e"/>
<rect x="652.8" y="729" width="4" height="6" fill="#fbf6e6"/><rect x="659.5" y="729" width="4" height="6" fill="#fbf6e6"/>
<rect x="617.6" y="727" width="19.4" height="24.6" fill="#2e2a3e"/>
<rect x="619.8" y="729" width="15" height="20" fill="#fbf6e6"/>
<path d="M627.3,729 L627.3,749 M619.8,739 L634.8,739" stroke="#2e2a3e" stroke-width="1.5"/>
<rect x="679" y="727" width="21.3" height="24.6" fill="#2e2a3e"/>
<rect x="681.3" y="729" width="16.5" height="20" fill="#fbf6e6"/>
<path d="M689.5,729 L689.5,749 M681.3,739 L697.8,739" stroke="#2e2a3e" stroke-width="1.5"/>
<rect x="628" y="718" width="8" height="3" fill="#fbf6e6"/>
<rect x="679" y="718" width="10" height="2.5" fill="#4a9aa0"/>
<!-- trees -->
<ellipse cx="594.8" cy="738.3" rx="12" ry="16.5" fill="#2e2a3e"/>
<ellipse cx="592.5" cy="738.3" rx="10" ry="16.5" fill="#5fb8bf"/>
<path d="M593.5,727 L593.5,758 M593.5,743 L587.5,737 M593.5,738 L598,734" stroke="#fbf6e6" stroke-width="1.6" fill="none"/>
<ellipse cx="720.7" cy="739.8" rx="6.7" ry="12.2" fill="#fbf6e6"/>
<path d="M721,732 L721,758 M721,741 L716.5,736.5 M721,739 L725,735" stroke="#2e2a3e" stroke-width="1.5" fill="none"/>
<circle cx="712.5" cy="754.5" r="3.3" fill="#f3b27a"/>
<!-- ground -->
<path d="M581,758 L730,758 Q736,760 736,766 L581,766Z" fill="#2e2a3e"/>
<rect x="581" y="766" width="157" height="2" fill="#fbf8ea"/>
</g>
<!-- bottle -->
<g id="bottle">
<rect x="586" y="827" width="47" height="66.6" fill="#a7d1d0"/>
<rect x="596" y="831" width="24" height="28" rx="5" fill="none" stroke="#2e2a3e" stroke-width="4"/>
<path d="M588,893 L588,866 Q588,851 607,851 Q628,851 628,868 L628,893Z" fill="#fbf6e6"/>
<path d="M611,852 Q632,853 632.5,872 L632.5,893 L622.5,893 L622.5,872 Q622,857 611,852Z" fill="#6fc0c4"/>
<path d="M616,852.5 Q633,856 633,874 L633,893 L627.5,893 L627.5,874 Q627,860 616,852.5Z" fill="#2e2a3e"/>
<rect x="604" y="840" width="6" height="11" fill="#fbf6e6"/>
<rect x="610" y="840" width="5" height="11" fill="#2e2a3e"/>
<rect x="601" y="857" width="15.8" height="35" rx="5" fill="#1aa5a0" stroke="#0e2e1e" stroke-width="1.6"/>
<rect x="602" y="858" width="13" height="3" fill="#fbf6e6"/>
<g stroke="#0e2e1e" stroke-width="1"><path d="M602,863.5 L611,863.5 M602,869 L611,869 M602,874.5 L611,874.5 M602,880 L611,880 M602,885.5 L611,885.5"/></g>
<rect x="619" y="868" width="3.5" height="2" fill="#2e2a3e"/>
<rect x="592" y="874" width="6" height="2" fill="#8fd0ef"/>
<rect x="586" y="892.5" width="47" height="1.5" fill="#2e2a3e"/>
</g>
</svg>
</div>
<div id="log" class="a">
<div class="a ll tL" style="top:-14px">(0.00)</div>
<div class="a ll tA" style="top:3px">customer_spoilage is spoilage_big <b class="z">0.00</b> =&gt; priority is override (0.00)</div>
<div class="a ll tB" style="top:20px">Centroid na.</div>
<div class="a ll tC" style="top:37px">Rules ran at end of step 35:</div>
<div class="a ll tD" style="top:54px">weather is summer_good <b class="z">0.00</b> =&gt; days_to_delivery is four_weekly (0.00)</div>
<div class="a ll tE" style="top:71px">weather is summer_poor <b class="z">0.00</b> =&gt; days_to_delivery is three_weekly (0.00)</div>
<div class="a ll tF" style="top:88px">weather is winter_ok <b class="z">0.00</b> =&gt; days_to_delivery is two_weekly (0.00)</div>
<div class="a ll tG" style="top:105px">weather is winter_chill <b class="r">0.83</b> =&gt; days_to_delivery is weekly (0.83)</div>
<div class="a ll tH" style="top:122px">Centroid 7.00.</div>
<div class="a ll tI" style="top:156px">No priority override. Normal handling, used conclusion from weather-severity</div>
<div class="a ll tJ" style="top:173px">rules, concluded delivery of 1 bottle at step 37.</div>
<div class="a ll tC" style="top:190px">Rules ran at end of step 36:</div>
<div class="a ll tK" style="top:207px">customer_spoilage is spoilage_small <b class="z">0.00</b> =&gt; priority is follow_standard_procedure</div>
<div class="a ll tL" style="top:224px">(0.00)</div>
<div class="a ll tA" style="top:241px">customer_spoilage is spoilage_big <b class="z">0.00</b> =&gt; priority is override (0.00)</div>
<div class="a ll tB" style="top:258px">Centroid na.</div>
<div class="a ll tC" style="top:275px">Rules ran at end of step 36:</div>
<div class="a ll tD" style="top:292px">weather is summer_good <b class="z">0.00</b> =&gt; days_to_delivery is four_weekly (0.00)</div>
<div class="a ll tE" style="top:309px">weather is summer_poor <b class="z">0.00</b> =&gt; days_to_delivery is three_weekly (0.00)</div>
<div class="a ll tF" style="top:326px">weather is winter_ok <b class="r">0.71</b> =&gt; days_to_delivery is two_weekly (0.71)</div>
<div class="a ll tG" style="top:343px">weather is winter_chill <b class="z">0.03</b> =&gt; days_to_delivery is weekly (0.03)</div>
<div class="a ll tH" style="top:360px">Centroid 13.76.</div>
<div class="a ll tI" style="top:394px">No priority override. Normal handling, used conclusion from weather-severity</div>
<div class="a ll tJ" style="top:411px">rules, concluded delivery of 1 bottle at step 40.</div>
<div class="a ll tC" style="top:428px">Rules ran at end of step 37:</div>
<div class="a ll tK" style="top:445px">customer_spoilage is spoilage_small <b class="z">0.00</b> =&gt; priority is follow_standard_procedure</div>
<div class="a ll tL" style="top:462px">(0.00)</div>
<div class="a ll tA" style="top:479px">customer_spoilage is spoilage_big <b class="z">0.00</b> =&gt; priority is override (0.00)</div>
<div class="a ll tB" style="top:496px">Centroid na.</div>
<div class="a ll tC" style="top:513px">Rules ran at end of step 37:</div>
<div class="a ll tD" style="top:530px">weather is summer_good <b class="r">0.86</b> =&gt; days_to_delivery is four_weekly (0.86)</div>
<div class="a ll tE" style="top:547px">weather is summer_poor <b class="z">0.00</b> =&gt; days_to_delivery is three_weekly (0.00)</div>
<div class="a ll tF" style="top:564px">weather is winter_ok <b class="z">0.00</b> =&gt; days_to_delivery is two_weekly (0.00)</div>
<div class="a ll tG" style="top:581px">weather is winter_chill <b class="z">0.00</b> =&gt; days_to_delivery is weekly (0.00)</div>
<div class="a ll tH" style="top:598px">Centroid 28.00.</div>
</div>

<div id="pscroll" class="a"></div>
<div id="pthumb" class="a"></div>
<div class="a" style="left:1509px;top:363px;width:21px;height:626px;background:#efefef"></div>
<div class="a" style="left:1509px;top:930px;width:21px;height:38px;background:#cdcdcd"></div>
<div class="a" style="left:925px;top:363px;width:584px;height:9px;background:linear-gradient(#dddddd,rgba(242,242,242,0))"></div>
<div class="a" style="left:925px;top:363px;width:8px;height:626px;background:linear-gradient(90deg,#e2e2e2,rgba(242,242,242,0))"></div>
<div class="a" style="left:925px;top:979px;width:584px;height:10px;background:linear-gradient(rgba(242,242,242,0),#e4e4e4)"></div>
<svg class="a" style="left:0;top:0" width="1568" height="1006" viewBox="0 0 1568 1006">
<g fill="none" stroke="#585858" stroke-width="2.6" stroke-linejoin="miter">
<path d="M1514.5,376 L1519.5,370 L1524.5,376"/>
<path d="M1514.5,976 L1519.5,982 L1524.5,976"/>
<path d="M1550.5,122.5 L1555.5,116.5 L1560.5,122.5"/>
<path d="M1550.5,991 L1555.5,997 L1560.5,991"/>
</g>
</svg>
<div id="winr" class="a"></div>
<div id="deskb" class="a"></div>
</body></html>
